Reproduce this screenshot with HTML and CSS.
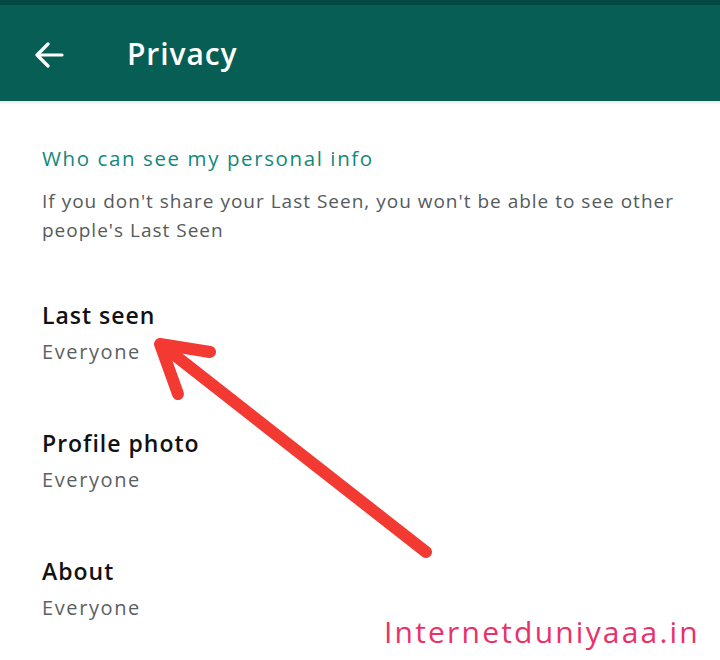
FILE: index.html
```html
<!DOCTYPE html>
<html>
<head>
<meta charset="utf-8">
<link rel="stylesheet" href="styles.css">
</head>
<body>
<div class="screen">
  <div class="status"></div>
  <header class="appbar">
    <svg class="back" width="30" height="26" viewBox="0 0 30 26">
      <path d="M28 13H3M14 2L3 13l11 11" fill="none" stroke="#fff" stroke-width="3.2" stroke-linecap="round" stroke-linejoin="round"/>
    </svg>
    <h1 class="title">Privacy</h1>
  </header>
  <div class="shadow"></div>
  <main class="content">
    <section class="intro">
      <h2 class="section-title">Who can see my personal info</h2>
      <p class="desc">If you don't share your Last Seen, you won't be able to see other people's Last Seen</p>
    </section>
    <div class="item">
      <div class="item-title">Last seen</div>
      <div class="item-value">Everyone</div>
    </div>
    <div class="item">
      <div class="item-title">Profile photo</div>
      <div class="item-value">Everyone</div>
    </div>
    <div class="item">
      <div class="item-title">About</div>
      <div class="item-value">Everyone</div>
    </div>
  </main>
  <svg class="annot" width="720" height="660" viewBox="0 0 720 660">
    <g fill="none" stroke="#f23a33" stroke-width="12" stroke-linecap="round" stroke-linejoin="round">
      <path d="M426 552L163 346"/>
      <path d="M210 352L160 344L178 394"/>
    </g>
  </svg>
  <div class="watermark">Internetduniyaaa.in</div>
</div>
</body>
</html>
```
FILE: styles.css
```css
* { box-sizing: border-box; }
html, body { margin: 0; padding: 0; background: #fff; }
body { font-family: "Open Sans", "Noto Sans", sans-serif; }
.screen { position: relative; width: 720px; height: 660px; overflow: hidden; background: #fff; }
.status { height: 5px; background: #054a42; }
.appbar { height: 96px; background: #075e54; display: flex; align-items: center; padding-left: 34px; }
.back { display: block; margin-top: 4px; }
.title { margin: 0 0 0 63px; color: #fff; font-size: 30px; font-weight: 600; letter-spacing: 0.9px; }
.shadow { height: 4px; background: linear-gradient(#e4e8e7, #fff); }
.content { padding: 40px 12px 0 42px; }
.section-title { margin: 0; color: #12887a; font-size: 20.5px; font-weight: 500; line-height: 26px; letter-spacing: 1.6px; }
.desc { margin: 16px 0 0; color: #555a5c; font-size: 19px; line-height: 29px; letter-spacing: 1px; }
.item { padding-top: 58px; }
.intro + .item { padding-top: 55px; }
.item + .item { padding-top: 62px; }
.item-title { color: #111; font-size: 23px; font-weight: 600; line-height: 30px; letter-spacing: 1px; }
.item-value { color: #5b6163; font-size: 20px; line-height: 28px; margin-top: 8px; letter-spacing: 1.6px; }
.annot { position: absolute; left: 0; top: 0; pointer-events: none; }
.watermark { position: absolute; left: 384px; top: 611px; color: #ea3068; font-size: 30px; letter-spacing: 2.2px; }
```
